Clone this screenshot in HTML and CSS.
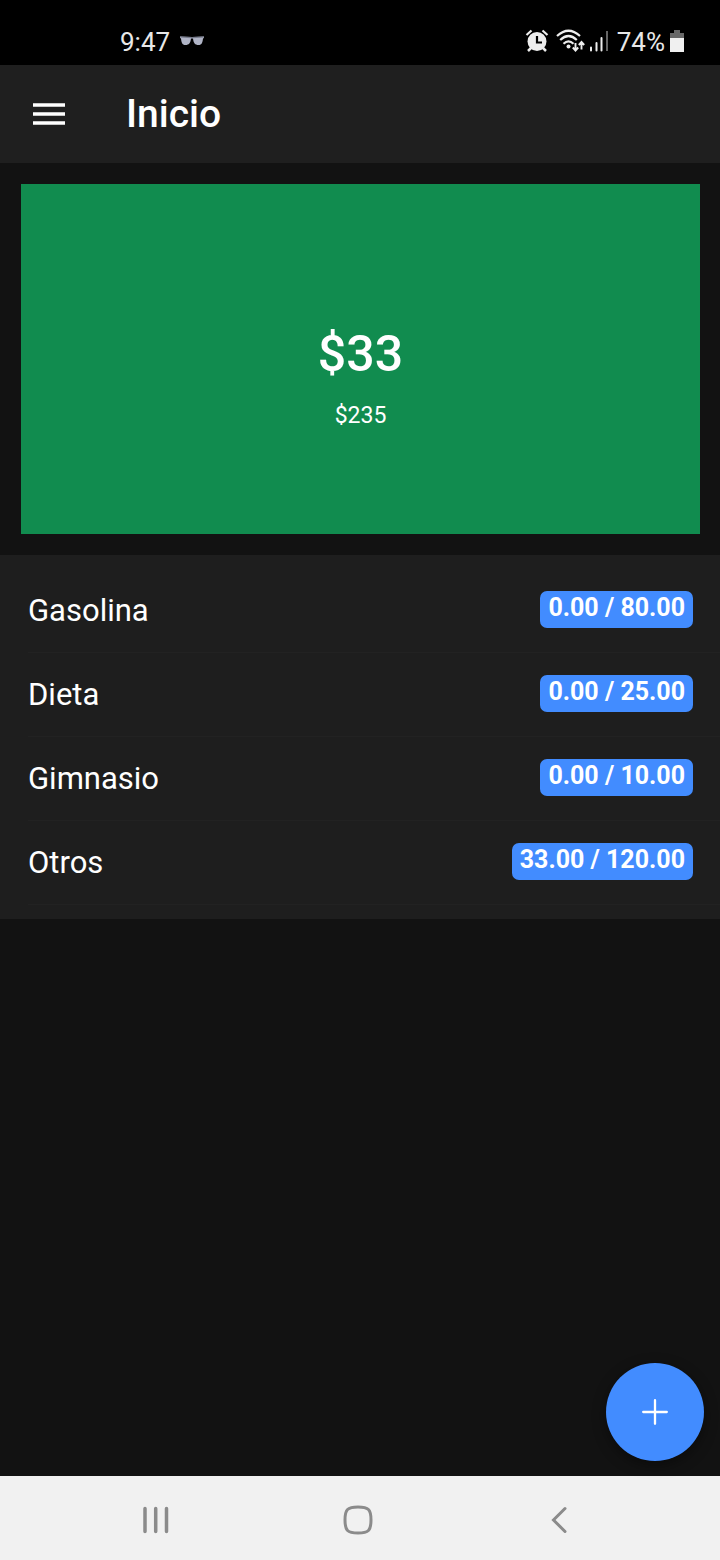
FILE: index.html
```html
<!DOCTYPE html>
<html lang="es">
<head>
<meta charset="utf-8">
<meta name="viewport" content="width=device-width, initial-scale=1">
<title>Inicio</title>
<link rel="stylesheet" href="styles.css">
</head>
<body>
<div class="screen">
  <div class="status">
    <div class="status-group">
      <span class="status-time">9:47</span>
      <svg class="glasses" width="24" height="10" viewBox="0 0 24 10" aria-hidden="true">
        <path d="M0 .5 12 1 24 .5V2l-1 .5C22.500 6.500 22 9 18.500 9S13.500 7 13 2.500h-2C10.500 7 9 9 5.500 9S1.500 6.500 1 2.500L0 2z" fill="#b0b4c6"/>
        <path d="M0 .5 12 1 24 .5V1.500L12 2.200 0 1.500z" fill="#777b8c"/>
      </svg>
    </div>
    <div class="status-group">
      <svg width="24" height="24" viewBox="0 0 24 24" aria-hidden="true">
        <circle cx="12" cy="12.500" r="9.500" fill="#ededed"/>
        <path d="M1.500 6 6.500 1.500M22.500 6 17.500 1.500" stroke="#ededed" stroke-width="2.200" fill="none"/>
        <path d="M6 19 3 22M18 19l3 3" stroke="#ededed" stroke-width="2.500" fill="none"/>
        <path d="M12 7v6.500h5" stroke="#000" stroke-width="2.200" fill="none"/>
      </svg>
      <svg class="wifi" width="29" height="24" viewBox="0 0 29 24" aria-hidden="true">
        <g fill="none" stroke="#ededed" stroke-width="2.200">
          <path d="M1 7Q12.500-3.500 24 7M4.200 11Q12.500 3 20.800 11M7.500 14.800Q12.500 10 17.500 14.800"/>
          <path d="M19.500 14v7.500M16.800 18.500l2.700 3 2.700-3M25.500 20.500v-7.500M22.800 16l2.700-3 2.700 3" stroke-width="1.900"/>
        </g>
        <circle cx="12.500" cy="17.500" r="2" fill="#ededed"/>
      </svg>
      <svg class="signal" width="18" height="22" viewBox="0 0 18 22" aria-hidden="true">
        <path d="M1 17.500v3M6.500 13v7.500M11.500 8v12.500" stroke="#ededed" stroke-width="2" stroke-linecap="round"/>
        <path d="M17 1v20" stroke="#666" stroke-width="2"/>
      </svg>
      <span class="status-battery">74%</span>
      <svg class="battery" width="14" height="22" viewBox="0 0 14 22" aria-hidden="true">
        <path d="M4 0h6v3h4v5H0V3h4z" fill="#686868"/>
        <path d="M0 8h14v14H0z" fill="#f0f0f0"/>
      </svg>
    </div>
  </div>

  <header class="toolbar">
    <button class="menu" type="button" aria-label="Menú">
      <svg width="32" height="22" viewBox="0 0 32 22" aria-hidden="true">
        <path d="M0 2h32M0 11h32M0 20h32" stroke="#fff" stroke-width="3.500"/>
      </svg>
    </button>
    <h1 class="title">Inicio</h1>
  </header>

  <main class="content">
    <section class="summary">
      <strong class="spent">$33</strong>
      <span class="budget">$235</span>
    </section>
    <ul class="list">
      <li class="item"><div class="item-inner"><span>Gasolina</span><span class="badge">0.00 / 80.00</span></div></li>
      <li class="item"><div class="item-inner"><span>Dieta</span><span class="badge">0.00 / 25.00</span></div></li>
      <li class="item"><div class="item-inner"><span>Gimnasio</span><span class="badge">0.00 / 10.00</span></div></li>
      <li class="item"><div class="item-inner"><span>Otros</span><span class="badge">33.00 / 120.00</span></div></li>
    </ul>
    <button class="fab" type="button" aria-label="Añadir">
      <svg width="26" height="26" viewBox="0 0 26 26" aria-hidden="true">
        <path d="M13 1.200v23.600M1.200 13h23.600" stroke="#fff" stroke-width="2.300" stroke-linecap="round"/>
      </svg>
    </button>
  </main>

  <nav class="navbar">
    <button class="nav-button" type="button" aria-label="Recientes">
      <svg width="26" height="28" viewBox="0 0 26 28" aria-hidden="true">
        <path d="M2 2.500v23M12.700 2.500v23M23.500 2.500v23" stroke="#8b8b8b" stroke-width="3.500" stroke-linecap="round"/>
      </svg>
    </button>
    <button class="nav-button" type="button" aria-label="Inicio">
      <svg width="30" height="30" viewBox="0 0 30 30" aria-hidden="true">
        <path d="M15 2C25.500 2 28 4.500 28 15S25.500 28 15 28 2 25.500 2 15 4.500 2 15 2z" stroke="#8b8b8b" stroke-width="3" fill="none"/>
      </svg>
    </button>
    <button class="nav-button" type="button" aria-label="Atrás">
      <svg width="16" height="28" viewBox="0 0 16 28" aria-hidden="true">
        <path d="M14 2.500 2.500 14 14 25.500" stroke="#8b8b8b" stroke-width="3" stroke-linecap="round" fill="none"/>
      </svg>
    </button>
  </nav>
</div>
</body>
</html>
```
FILE: styles.css
```css
* {
  box-sizing: border-box;
}

body {
  margin: 0;
  background: #121212;
  color: #fff;
  font-family: Roboto, sans-serif;
}

button {
  margin: 0;
  padding: 0;
  border: 0;
  background: none;
  display: flex;
  align-items: center;
  justify-content: center;
}

.screen {
  min-height: 100vh;
  display: flex;
  flex-direction: column;
}

.status {
  display: flex;
  align-items: center;
  justify-content: space-between;
  padding: 26px 36px 7px 120px;
  background: #000;
  color: #e8e8e8;
  font-size: 26px;
  line-height: 32px;
}

.status-group {
  display: flex;
  align-items: center;
}

.status-group svg {
  margin-bottom: 2px;
}

.glasses {
  margin-left: 10px;
}

.wifi {
  margin-left: 7px;
}

.signal {
  margin: 0 9px 0 5px;
}

.status-battery {
  margin-right: 5px;
}

.toolbar {
  display: flex;
  align-items: center;
  gap: 61px;
  height: 98px;
  padding: 0 33px;
  background: #1f1f1f;
}

.title {
  margin: 0;
  font-size: 39px;
  font-weight: 500;
  line-height: 48px;
}

.content {
  position: relative;
  flex: 1;
}

.summary {
  display: flex;
  flex-direction: column;
  align-items: center;
  justify-content: center;
  gap: 16px;
  min-height: 350px;
  margin: 21px 20px 21px 21px;
  padding-top: 37px;
  background: #118c4f;
}

.spent {
  font-size: 50px;
  font-weight: 500;
  line-height: 60px;
}

.budget {
  font-size: 23px;
  line-height: 32px;
}

.list {
  margin: 0;
  padding: 14px 0;
  list-style: none;
  background: #1e1e1e;
}

.item {
  padding-left: 28px;
}

.item-inner {
  display: flex;
  align-items: center;
  justify-content: space-between;
  height: 84px;
  padding-right: 27px;
  border-bottom: 1px solid #222;
  font-size: 31px;
}

.badge {
  margin-bottom: 2px;
  padding: 3px 8px 6px;
  border-radius: 7px;
  background: #428cff;
  font-size: 25px;
  font-weight: 700;
  line-height: 28px;
}

.fab {
  position: absolute;
  right: 16px;
  bottom: 15px;
  width: 98px;
  height: 98px;
  border-radius: 50%;
  background: #428cff;
  box-shadow: 0 4px 14px rgba(0, 0, 0, 0.4);
}

.navbar {
  display: flex;
  justify-content: space-between;
  height: 84px;
  padding: 3px 108px 0 103px;
  background: #f1f1f1;
}

.nav-button {
  width: 106px;
}
```
